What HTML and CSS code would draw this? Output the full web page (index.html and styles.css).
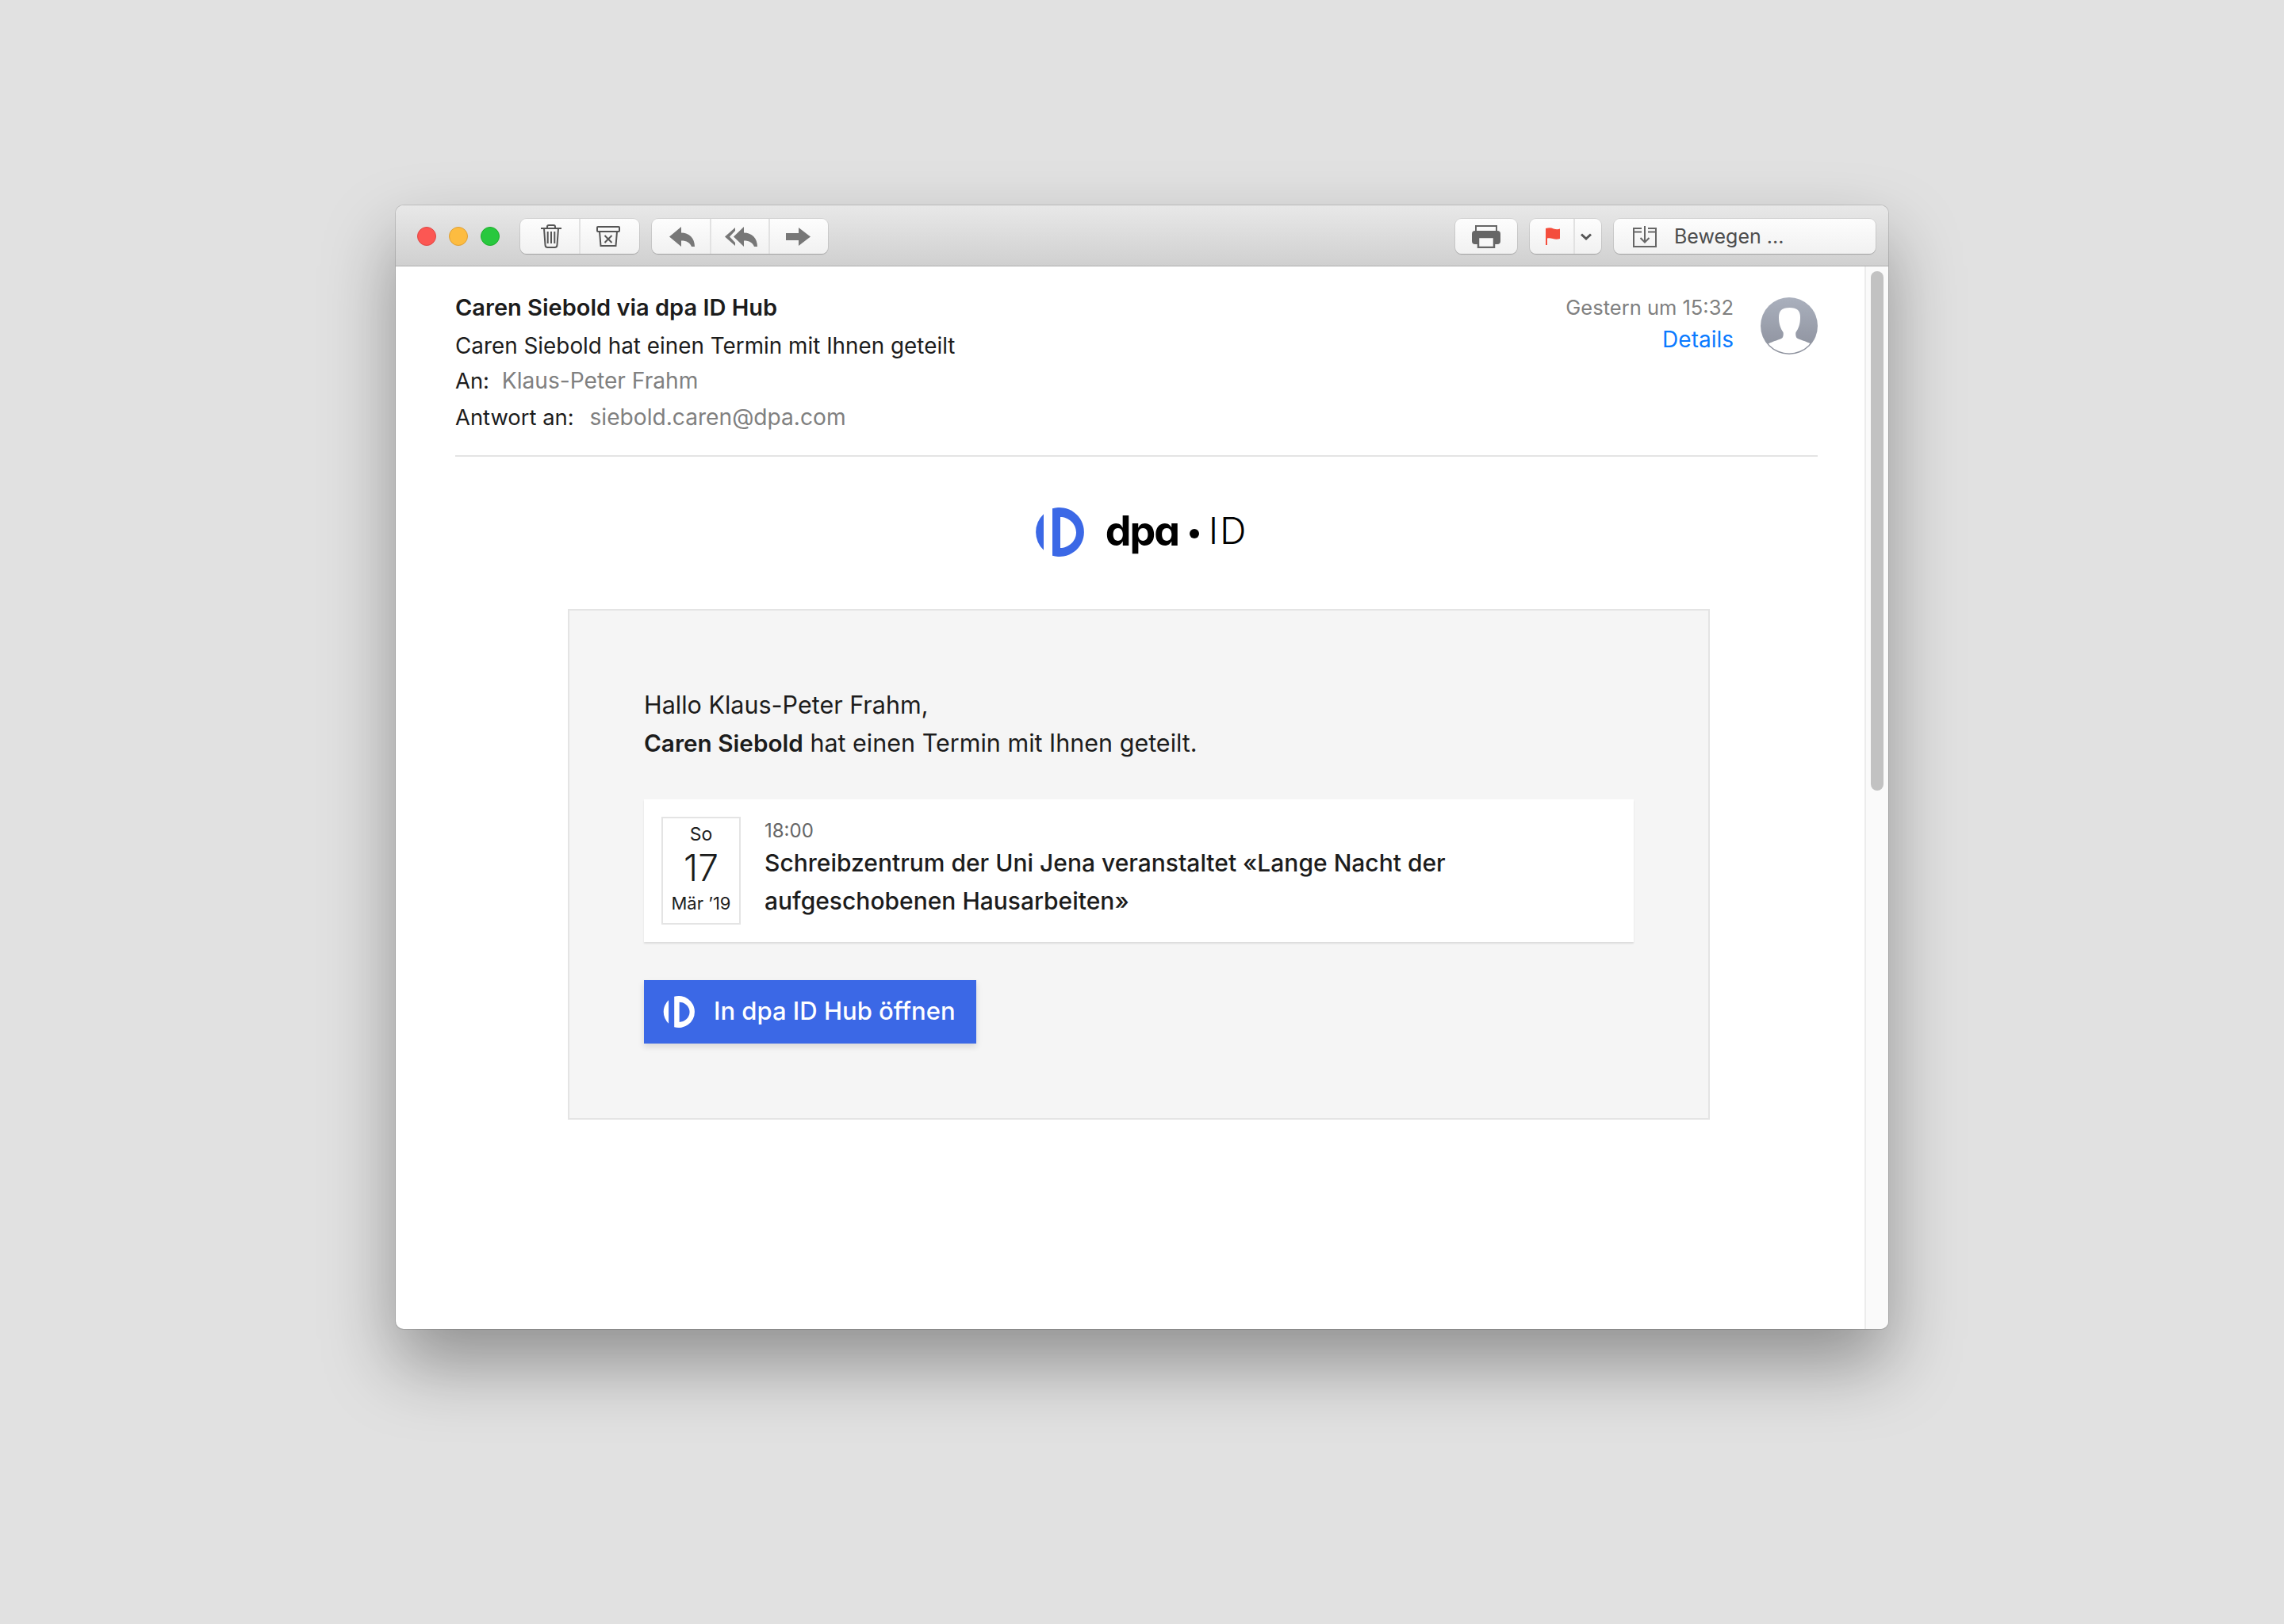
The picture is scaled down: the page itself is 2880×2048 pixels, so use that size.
FILE: index.html
```html
<!DOCTYPE html>
<html lang="de">
<head>
    <meta charset="UTF-8">
    <title>Caren Siebold hat einen Termin mit Ihnen geteilt</title>
    <link rel="stylesheet" href="styles.css">
</head>
<body>
    <div class="window">
        <div class="toolbar">
            <div class="lights">
                <span class="light red"></span>
                <span class="light yellow"></span>
                <span class="light green"></span>
            </div>
            <div class="btn-group trash-group">
                <span class="btn">
                    <svg width="26" height="30" viewBox="0 0 26 30" fill="none" stroke="#555" stroke-width="2"><path d="M0 5h26M8 5V3c0-1 1-2 2-2h6c1 0 2 1 2 2v2M4 5l1.500 21c.1 2 1 3 3 3h9c2 0 2.900-1 3-3L22 5"/><path stroke-width="2" d="M8.700 9v15M13 9v15M17.300 9v15"/></svg>
                </span>
                <span class="btn">
                    <svg width="30" height="26" viewBox="0 0 30 26" fill="none" stroke="#555" stroke-width="2"><rect x="1" y="1" width="28" height="6" rx="1"/><path d="M4 7l1.500 18h19L26 7"/><path d="M10.500 12l9 9M19.500 12l-9 9"/></svg>
                </span>
            </div>
            <div class="btn-group reply-group">
                <span class="btn">
                    <svg width="32" height="25" viewBox="0 0 32 25" fill="#777"><path d="M0 12.500L15 0v7.500c10 0 17 7 17 17.500h-4c-2-5-6-7.500-13-7.500V25z"/></svg>
                </span>
                <span class="btn">
                    <svg width="41" height="25" viewBox="0 0 41 25" fill="#777"><path d="M11 12.500L24 0v7.500c10 0 17 7 17 17.500h-4c-2-5-6-7.500-13-7.500V25z"/><path d="M0 12.500L13 1v4l-7 7.500 7 7.500v4z"/></svg>
                </span>
                <span class="btn">
                    <svg width="31" height="23" viewBox="0 0 31 23" fill="#777"><path d="M31 11.500L16 0v7H0v9h16v7z"/></svg>
                </span>
            </div>
            <div class="btn-group print-group">
                <span class="btn">
                    <svg width="36" height="29" viewBox="0 0 36 29"><path fill="none" stroke="#666" stroke-width="2" d="M5 7V1h26v6"/><rect y="7" width="36" height="17" rx="4" fill="#666"/><rect x="8" y="15" width="20" height="13" fill="#f8f8f8" stroke="#666" stroke-width="2.500"/></svg>
                </span>
            </div>
            <div class="btn-group flag-group">
                <span class="btn flag-btn">
                    <svg width="18" height="22" viewBox="0 0 18 22"><path fill="#f44d3c" d="M0 1c4-1 7-1 10 .5 3 1 6 1 8 0V14c-3 1-6 1-9 0-3-1-5-1-7-.5V22H0z"/></svg>
                </span>
                <span class="btn chevron-btn">
                    <svg width="14" height="9" viewBox="0 0 14 9" fill="none" stroke="#555" stroke-width="3"><path d="M1 1.500l6 5.500 6-5.500"/></svg>
                </span>
            </div>
            <div class="btn-group move-group">
                <span class="btn move-btn">
                    <svg width="30" height="27" viewBox="0 0 30 27" fill="none" stroke="#666" stroke-width="2"><path d="M11 3H1v23h28V3H19M1 7.500h10M19 7.500h10M15 0v20M9.500 15l5.500 5.500 5.500-5.500"/></svg>
                    <span>Bewegen ...</span>
                </span>
            </div>
        </div>

        <div class="mail-area">
            <div class="mail-content">
                <div class="mail-head">
                    <div class="head-lines">
                        <div class="sender">Caren Siebold via dpa ID Hub</div>
                        <div class="subject">Caren Siebold hat einen Termin mit Ihnen geteilt</div>
                        <div class="meta"><span class="meta-label">An:</span> <span class="meta-value">Klaus-Peter Frahm</span></div>
                        <div class="meta"><span class="meta-label">Antwort an:</span> <span class="meta-value reply-to">siebold.caren@dpa.com</span></div>
                    </div>
                    <div class="head-side">
                        <div class="sent">Gestern um 15:32</div>
                        <div class="details">Details</div>
                    </div>
                    <svg class="avatar" width="72" height="72" viewBox="0 0 72 72">
                        <defs>
                            <linearGradient id="avatarBg" x1="0" y1="0" x2="0" y2="1">
                                <stop offset="0" stop-color="#aab0bd"/>
                                <stop offset="1" stop-color="#8c909c"/>
                            </linearGradient>
                            <clipPath id="avatarClip"><circle cx="36" cy="36" r="34.500"/></clipPath>
                        </defs>
                        <circle cx="36" cy="36" r="36" fill="url(#avatarBg)"/>
                        <path clip-path="url(#avatarClip)" fill="#fff" d="M36.500 13C32 13 28 14 26 16C24 18 23 21 23 25C23 29 23.500 33 24.500 36C25.500 39 27 42 28.500 44C29 46 28.800 49 27.500 51C24.500 53.500 16 55 9 59V72H64V59C57 55 48.500 53.500 45.500 51C44.200 49 44 46 44.500 44C46 42 47.500 39 48.500 36C49.500 33 50 29 50 25C50 21 49 18 47 16C45 14 41 13 36.500 13Z"/>
                    </svg>
                </div>

                <div class="brand">
                    <svg class="brand-mark" width="62" height="62" viewBox="0 0 62 62">
                        <path fill="#3b68e6" fill-rule="evenodd" d="M11 8.300V53.700A31 31 0 0 1 11 8.300zM22 1.300A31 31 0 1 1 22 60.700zM32 12v39c10 0 20-8 20-19.500S42 12 32 12z"/>
                    </svg>
                    <span class="brand-dpa">dpa</span>
                    <span class="brand-dot"></span>
                    <span class="brand-id">ID</span>
                </div>

                <div class="notice">
                    <p class="greeting">Hallo Klaus-Peter Frahm,<br><strong>Caren Siebold</strong> hat einen Termin mit Ihnen geteilt.</p>
                    <div class="event-card">
                        <div class="date-box">
                            <div class="date-day">So</div>
                            <div class="date-num">17</div>
                            <div class="date-month">Mär ’19</div>
                        </div>
                        <div class="event-info">
                            <div class="event-time">18:00</div>
                            <div class="event-title">Schreibzentrum der Uni Jena veranstaltet «Lange Nacht der aufgeschobenen Hausarbeiten»</div>
                        </div>
                    </div>
                    <span class="open-btn">
                        <svg width="40" height="40" viewBox="0 0 62 62">
                            <path fill="#fff" fill-rule="evenodd" d="M11 8.300V53.700A31 31 0 0 1 11 8.300zM22 1.300A31 31 0 1 1 22 60.700zM32 12v39c10 0 20-8 20-19.500S42 12 32 12z"/>
                        </svg>
                        <span class="open-label">In dpa ID Hub öffnen</span>
                    </span>
                </div>
            </div>
            <div class="scrollbar"><div class="thumb"></div></div>
        </div>
    </div>
</body>
</html>
```

FILE: styles.css
```css
body {
    margin: 0;
    padding: 259px 0 0 499px;
    height: 2048px;
    box-sizing: border-box;
    background: #e1e1e1;
    font-family: Inter, "Liberation Sans", sans-serif;
    color: #1c1c1c;
    overflow: hidden;
}
.window {
    width: 1882px;
    height: 1417px;
    display: flex;
    flex-direction: column;
    background: #fff;
    border-radius: 10px;
    overflow: hidden;
    box-shadow: 0 0 0 1px rgba(0,0,0,0.12), 0 44px 90px rgba(0,0,0,0.36);
}
.toolbar {
    height: 77px;
    flex: none;
    display: flex;
    align-items: center;
    padding: 2px 16px 0 27px;
    box-sizing: border-box;
    background: linear-gradient(#e8e8e8, #d0d0d0);
    border-bottom: 1px solid #aeaeae;
}
.lights {
    display: flex;
    gap: 16px;
    margin-right: 26px;
}
.light {
    width: 24px;
    height: 24px;
    border-radius: 50%;
    box-sizing: border-box;
}
.red { background: #fc5753; border: 1px solid #df4744; }
.yellow { background: #fdbc40; border: 1px solid #de9f34; }
.green { background: #28c83e; border: 1px solid #1dad2b; }
.btn-group {
    height: 44px;
    display: flex;
    margin-right: 16px;
    background: linear-gradient(#fdfdfd, #f1f1f1);
    border-radius: 8px;
    box-shadow: 0 0 0 1px rgba(0,0,0,0.07), 0 1px 1px rgba(0,0,0,0.18);
}
.btn {
    display: flex;
    align-items: center;
    justify-content: center;
    flex: 1;
    border-left: 2px solid #e2e2e2;
}
.btn:first-child { border-left: 0; }
.trash-group { width: 150px; }
.trash-group .btn:first-child { padding-left: 4px; }
.trash-group .btn:last-child { padding-right: 4px; }
.reply-group { width: 222px; }
.reply-group .btn:first-child { padding-left: 3px; }
.reply-group .btn:nth-child(2) { padding-left: 2px; }
.reply-group .btn:last-child { padding-right: 3px; }
.print-group { width: 78px; margin-left: auto; margin-right: 16px; }
.flag-group { width: 90px; margin-right: 16px; }
.flag-btn { flex: none; width: 55px; padding-left: 3px; box-sizing: border-box; }
.chevron-btn { padding-right: 5px; }
.move-group { width: 330px; margin-right: 0; }
.move-btn {
    justify-content: flex-start;
    padding-left: 24px;
    gap: 22px;
    font-size: 25px;
    color: #4d4d4d;
}
.mail-area {
    flex: 1;
    display: flex;
    min-height: 0;
}
.mail-content {
    flex: 1;
    padding: 0 59px 0 75px;
}
.mail-head {
    display: flex;
    align-items: flex-start;
    height: 240px;
    box-sizing: border-box;
    padding-top: 30px;
    border-bottom: 2px solid #e4e4e4;
    font-size: 27.850px;
}
.head-lines {
    flex: 1;
    line-height: 45px;
}
.sender { font-size: 29px; font-weight: 600; line-height: 44px; }
.subject { line-height: 44px; padding-top: 4px; }
.meta + .meta { margin-top: 1px; }
.meta-label { margin-right: 8px; font-size: 27.400px; }
.meta-value { color: #808080; font-size: 28.150px; }
.reply-to { margin-left: 4px; }
.head-side {
    text-align: right;
    margin-right: 34px;
    padding-top: 1px;
}
.sent { color: #808080; font-size: 25.500px; line-height: 41px; }
.details { color: #0a7aff; font-size: 28px; line-height: 41px; }
.avatar { margin-top: 9px; }
.brand {
    height: 192px;
    box-sizing: border-box;
    padding: 0 0 2px 12px;
    display: flex;
    align-items: center;
    justify-content: center;
}
.brand-mark { margin-right: 27px; }
.brand-dpa {
    font-size: 52px;
    font-weight: 700;
    color: #000;
    font-feature-settings: "cv11";
    letter-spacing: -2px;
    margin-bottom: 4px;
}
.brand-dot {
    width: 12px;
    height: 12px;
    border-radius: 50%;
    background: #000;
    margin: 4px 12px 0 14px;
}
.brand-id {
    font-size: 46px;
    font-weight: 300;
    color: #000;
    letter-spacing: 2px;
    margin-bottom: 4px;
}
.notice {
    margin: 0 136px 0 142px;
    height: 644px;
    box-sizing: border-box;
    padding: 95px 94px 0 94px;
    background: #f5f5f5;
    border: 2px solid #e4e4e4;
}
.greeting {
    margin: 0 0 47px;
    font-size: 30.500px;
    line-height: 48px;
}
.greeting strong { font-weight: 600; font-size: 29.700px; }
.event-card {
    display: flex;
    align-items: flex-start;
    gap: 30px;
    height: 180px;
    box-sizing: border-box;
    padding: 22px;
    background: #fff;
    box-shadow: 0 2px 2px rgba(0,0,0,0.1);
}
.date-box {
    width: 100px;
    height: 136px;
    box-sizing: border-box;
    flex: none;
    border: 2px solid #e4e4e4;
    text-align: center;
}
.date-day { font-size: 23px; margin-top: 5px; line-height: 30px; }
.date-num { font-size: 46px; font-weight: 300; line-height: 54px; }
.date-month { font-size: 22px; line-height: 30px; margin-top: 3px; }
.event-info { max-width: 900px; padding-top: 2px; }
.event-time { font-size: 24px; color: #666; line-height: 32px; }
.event-title { font-size: 30px; font-weight: 500; line-height: 48px; }
.open-btn {
    display: inline-flex;
    align-items: center;
    gap: 24px;
    height: 80px;
    margin-top: 48px;
    padding: 0 26px 0 24px;
    background: #3b68e6;
    color: #fff;
    font-size: 31px;
    font-weight: 500;
    box-shadow: 0 4px 8px rgba(0,0,0,0.12);
}
.open-label { margin-bottom: 3px; }
.scrollbar {
    width: 30px;
    flex: none;
    box-sizing: border-box;
    padding: 6px 6px 0 6px;
    background: #fafafa;
    border-left: 2px solid #ececec;
}
.thumb {
    width: 16px;
    height: 655px;
    background: #c2c2c2;
    border-radius: 8px;
}
```
